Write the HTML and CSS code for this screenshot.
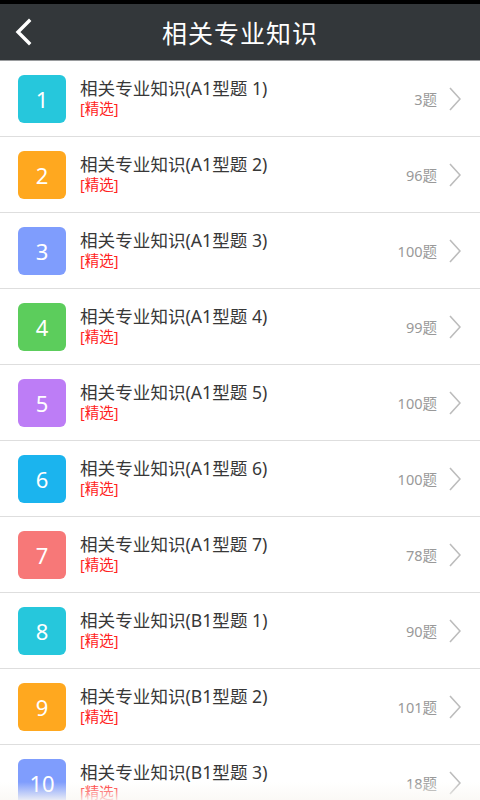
FILE: index.html
```html
<!DOCTYPE html>
<html lang="zh-CN">
<head>
    <meta charset="UTF-8">
    <meta name="viewport" content="width=device-width, initial-scale=1.0">
    <title>相关专业知识</title>
    <link rel="stylesheet" href="styles.css">
</head>
<body>
    <div class="status-bar"></div>
    <div class="header">
        <svg class="back" width="20" height="28" viewBox="0 0 20 28">
            <path d="M15 3 L4 14 L15 25" fill="none" stroke="#fff" stroke-width="3.4" stroke-linecap="square"/>
        </svg>
        <h1>相关专业知识</h1>
    </div>

    <ul class="list">
        <li class="item"><span class="num c-cyan">1</span><div class="info"><div class="title">相关专业知识(A1型题 1)</div><div class="tag">[精选]</div></div><span class="count">3题</span><svg class="arrow" width="12" height="24" viewBox="0 0 12 24"><path d="M1 1 L11 12 L1 23" fill="none" stroke="#bcbcbc" stroke-width="1.6"/></svg></li>
        <li class="item"><span class="num c-orange">2</span><div class="info"><div class="title">相关专业知识(A1型题 2)</div><div class="tag">[精选]</div></div><span class="count">96题</span><svg class="arrow" width="12" height="24" viewBox="0 0 12 24"><path d="M1 1 L11 12 L1 23" fill="none" stroke="#bcbcbc" stroke-width="1.6"/></svg></li>
        <li class="item"><span class="num c-blue">3</span><div class="info"><div class="title">相关专业知识(A1型题 3)</div><div class="tag">[精选]</div></div><span class="count">100题</span><svg class="arrow" width="12" height="24" viewBox="0 0 12 24"><path d="M1 1 L11 12 L1 23" fill="none" stroke="#bcbcbc" stroke-width="1.6"/></svg></li>
        <li class="item"><span class="num c-green">4</span><div class="info"><div class="title">相关专业知识(A1型题 4)</div><div class="tag">[精选]</div></div><span class="count">99题</span><svg class="arrow" width="12" height="24" viewBox="0 0 12 24"><path d="M1 1 L11 12 L1 23" fill="none" stroke="#bcbcbc" stroke-width="1.6"/></svg></li>
        <li class="item"><span class="num c-purple">5</span><div class="info"><div class="title">相关专业知识(A1型题 5)</div><div class="tag">[精选]</div></div><span class="count">100题</span><svg class="arrow" width="12" height="24" viewBox="0 0 12 24"><path d="M1 1 L11 12 L1 23" fill="none" stroke="#bcbcbc" stroke-width="1.6"/></svg></li>
        <li class="item"><span class="num c-sky">6</span><div class="info"><div class="title">相关专业知识(A1型题 6)</div><div class="tag">[精选]</div></div><span class="count">100题</span><svg class="arrow" width="12" height="24" viewBox="0 0 12 24"><path d="M1 1 L11 12 L1 23" fill="none" stroke="#bcbcbc" stroke-width="1.6"/></svg></li>
        <li class="item"><span class="num c-red">7</span><div class="info"><div class="title">相关专业知识(A1型题 7)</div><div class="tag">[精选]</div></div><span class="count">78题</span><svg class="arrow" width="12" height="24" viewBox="0 0 12 24"><path d="M1 1 L11 12 L1 23" fill="none" stroke="#bcbcbc" stroke-width="1.6"/></svg></li>
        <li class="item"><span class="num c-cyan">8</span><div class="info"><div class="title">相关专业知识(B1型题 1)</div><div class="tag">[精选]</div></div><span class="count">90题</span><svg class="arrow" width="12" height="24" viewBox="0 0 12 24"><path d="M1 1 L11 12 L1 23" fill="none" stroke="#bcbcbc" stroke-width="1.6"/></svg></li>
        <li class="item"><span class="num c-orange">9</span><div class="info"><div class="title">相关专业知识(B1型题 2)</div><div class="tag">[精选]</div></div><span class="count">101题</span><svg class="arrow" width="12" height="24" viewBox="0 0 12 24"><path d="M1 1 L11 12 L1 23" fill="none" stroke="#bcbcbc" stroke-width="1.6"/></svg></li>
        <li class="item"><span class="num c-blue">10</span><div class="info"><div class="title">相关专业知识(B1型题 3)</div><div class="tag">[精选]</div></div><span class="count">18题</span><svg class="arrow" width="12" height="24" viewBox="0 0 12 24"><path d="M1 1 L11 12 L1 23" fill="none" stroke="#bcbcbc" stroke-width="1.6"/></svg></li>
    </ul>
    <div class="fade"></div>
</body>
</html>
```

FILE: styles.css
```css
body {
    margin: 0;
    width: 480px;
    height: 800px;
    overflow: hidden;
    background: #fff;
    font-family: "Noto Sans", "Noto Sans CJK SC", sans-serif;
}
.status-bar {
    height: 4px;
    background: #000;
}
.header {
    height: 56px;
    background: #33373a;
    border-bottom: 1px solid #9a9c9e;
    display: flex;
    align-items: center;
    justify-content: center;
    position: relative;
}
.back {
    position: absolute;
    left: 14px;
    top: 14px;
}
.header h1 {
    margin: 0;
    color: #fff;
    font-size: 25px;
    font-weight: normal;
    letter-spacing: 1px;
}
.list {
    list-style: none;
    margin: 0;
    padding: 0;
}
.item {
    height: 75px;
    border-bottom: 1px solid #dedede;
    display: flex;
    align-items: center;
    padding: 0 19px 0 18px;
}
.num {
    width: 48px;
    height: 48px;
    border-radius: 6px;
    color: #fff;
    font-size: 22px;
    display: flex;
    align-items: center;
    justify-content: center;
    flex-shrink: 0;
}
.c-cyan { background: #26c7dc; }
.c-orange { background: #ffa81f; }
.c-blue { background: #7f9dfd; }
.c-green { background: #5ccd5c; }
.c-purple { background: #bd7df6; }
.c-sky { background: #1bb4ee; }
.c-red { background: #f77878; }
.info {
    flex: 1;
    margin-left: 14px;
    margin-top: -3px;
}
.title {
    font-size: 17.6px;
    color: #383838;
    line-height: 22px;
}
.tag {
    font-size: 14.5px;
    color: #f22;
    line-height: 18px;
}
.count {
    font-size: 14.5px;
    color: #999;
}
.arrow {
    margin-left: 12px;
    flex-shrink: 0;
}
.fade {
    position: absolute;
    left: 0;
    right: 0;
    bottom: 0;
    height: 18px;
    background: linear-gradient(rgba(250, 248, 244, 0), rgba(250, 248, 244, 0.85));
}
```
